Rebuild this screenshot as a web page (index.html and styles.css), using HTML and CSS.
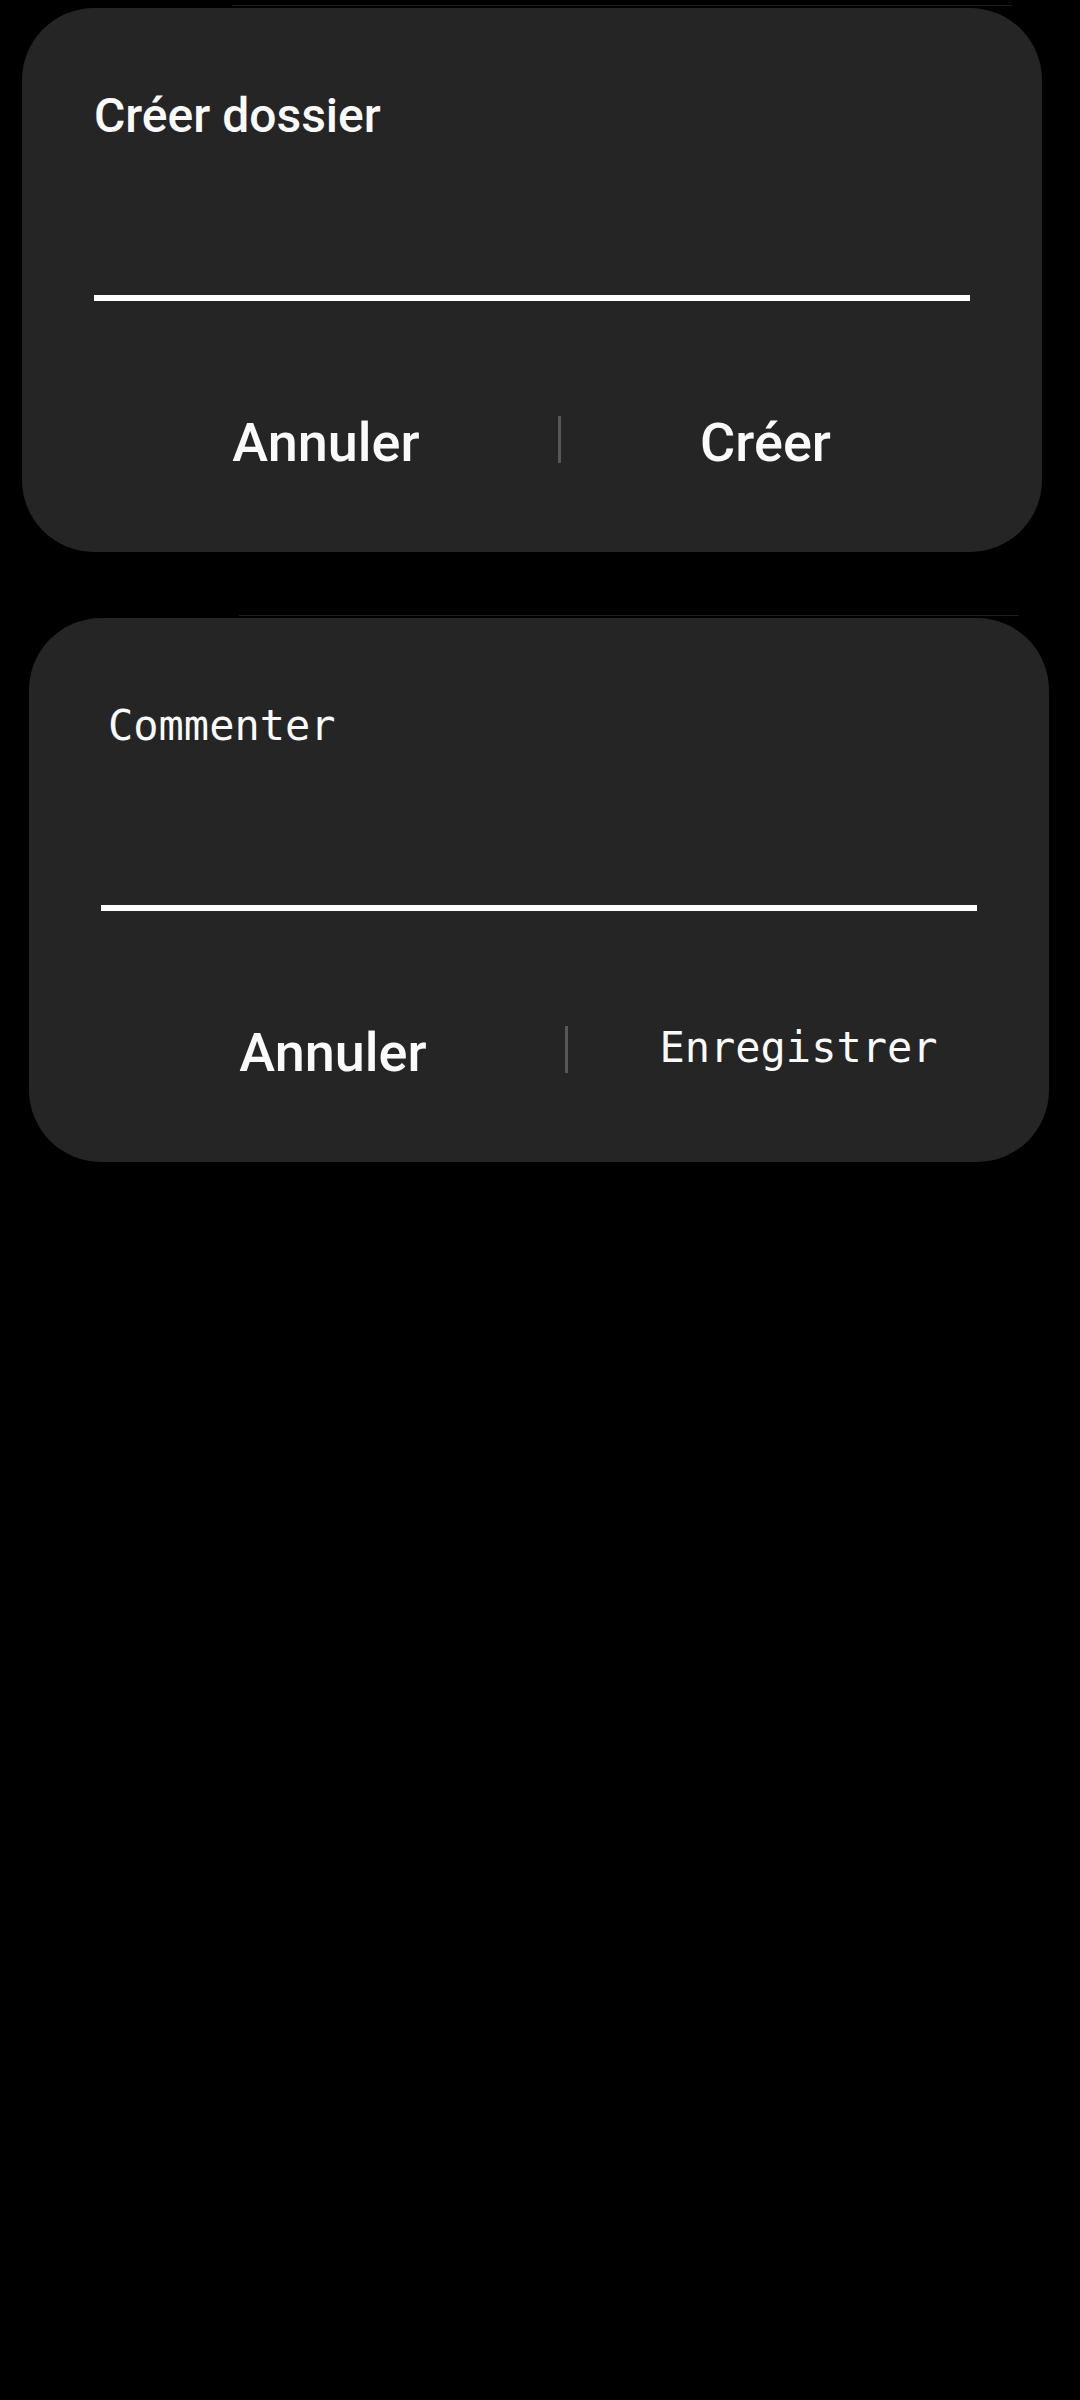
FILE: index.html
```html
<!DOCTYPE html>
<html lang="fr">
<head>
<meta charset="utf-8">
<title>Dialogs</title>
<link rel="stylesheet" href="styles.css">
</head>
<body>
<div class="screen">
  <div class="dialog">
    <div class="edge"></div>
    <div class="card">
      <div class="title">Créer dossier</div>
      <div class="field"></div>
      <div class="actions">
        <div class="action">Annuler</div>
        <div class="divider"></div>
        <div class="action">Créer</div>
      </div>
    </div>
  </div>
  <div class="dialog dialog--offset">
    <div class="edge"></div>
    <div class="card">
      <div class="title title--mono">Commenter</div>
      <div class="field"></div>
      <div class="actions">
        <div class="action">Annuler</div>
        <div class="divider"></div>
        <div class="action action--mono">Enregistrer</div>
      </div>
    </div>
  </div>
</div>
</body>
</html>
```
FILE: styles.css
```css
html, body {
  margin: 0;
  background: #000;
}
.screen {
  padding-top: 5px;
  display: flex;
  flex-direction: column;
  gap: 63px;
}
.dialog {
  width: 1020px;
  margin-left: 22px;
}
.dialog--offset {
  margin-left: 29px;
}
.edge {
  height: 1px;
  width: 780px;
  margin-left: 210px;
  margin-bottom: 2px;
  background: #1e1e1e;
}
.card {
  background: #252525;
  border-radius: 72px;
  padding: 80px 72px 82px;
}
.title {
  font-family: Roboto, "Liberation Sans", sans-serif;
  font-weight: 500;
  font-size: 48px;
  line-height: 56px;
  color: #fafafa;
  white-space: nowrap;
}
.title--mono {
  font-family: "DejaVu Sans Mono", "Liberation Mono", monospace;
  font-weight: 400;
  font-size: 42px;
  padding-left: 7px;
}
.field {
  height: 151px;
  border-bottom: 6px solid #ffffff;
}
.actions {
  display: grid;
  grid-template-columns: 464px 3px minmax(0, 1fr);
  align-items: start;
  margin-top: 115px;
}
.action {
  text-align: center;
  font-family: Roboto, "Liberation Sans", sans-serif;
  font-weight: 500;
  font-size: 54px;
  line-height: 54px;
  color: #fafafa;
  white-space: nowrap;
}
.action--mono {
  font-family: "DejaVu Sans Mono", "Liberation Mono", monospace;
  font-weight: 400;
  font-size: 42px;
  line-height: 44px;
  padding-left: 52px;
}
.divider {
  width: 3px;
  height: 47px;
  background: #575757;
}
```
